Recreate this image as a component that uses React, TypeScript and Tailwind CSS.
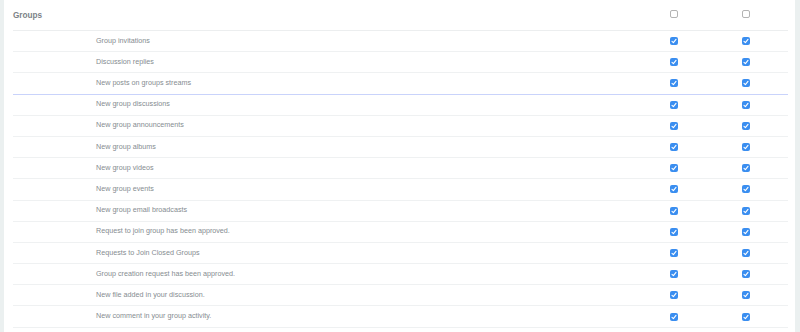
import React from "react";

const rows: { label: string; blue?: boolean }[] = [
  { label: "Group invitations" },
  { label: "Discussion replies" },
  { label: "New posts on groups streams", blue: true },
  { label: "New group discussions" },
  { label: "New group announcements" },
  { label: "New group albums" },
  { label: "New group videos" },
  { label: "New group events" },
  { label: "New group email broadcasts" },
  { label: "Request to join group has been approved." },
  { label: "Requests to Join Closed Groups" },
  { label: "Group creation request has been approved." },
  { label: "New file added in your discussion." },
  { label: "New comment in your group activity." },
];

function Box({ checked }: { checked: boolean }) {
  if (!checked) {
    return (
      <div className="w-[8px] h-[8px] rounded-[2px] border border-[#b4b4b4] bg-white" />
    );
  }
  return (
    <div className="w-[8px] h-[8px] rounded-[2px] bg-[#3a8ef0] flex items-center justify-center">
      <svg width="6" height="6" viewBox="0 0 6 6">
        <path d="M1 3.3 L2.4 4.6 L5 1.4" stroke="#fff" strokeWidth="1.1" fill="none" strokeLinecap="round" strokeLinejoin="round" />
      </svg>
    </div>
  );
}

export default function App() {
  return (
    <div
      className="w-[800px] h-[332px] flex bg-[#ebf0f0] overflow-hidden"
      style={{ fontFamily: '"Liberation Sans", Arial, sans-serif' }}
    >
      <div className="w-[4px] shrink-0" />
      <div className="w-[791px] shrink-0 bg-white pl-[9px] pr-[7px]">
        <div className="h-[31px] flex items-center border-b border-[#eceeef]">
          <div className="flex-1 text-[8.2px] font-bold text-[#7c8287] pt-[3px]">Groups</div>
          <div className="w-[72px] flex justify-center pb-[2px]">
            <Box checked={false} />
          </div>
          <div className="w-[72px] flex justify-center pb-[2px]">
            <Box checked={false} />
          </div>
          <div className="w-[6px]" />
        </div>
        {rows.map((r) => (
          <div
            key={r.label}
            className={
              "h-[21.2px] flex items-center " +
              (r.blue ? "border-b-[1.5px] border-[#c9d3fb]" : "border-b border-[#eff1f2]")
            }
          >
            <div className="flex-1 pl-[83px] text-[7.2px] text-[#868c91]">{r.label}</div>
            <div className="w-[72px] flex justify-center">
              <Box checked={true} />
            </div>
            <div className="w-[72px] flex justify-center">
              <Box checked={true} />
            </div>
            <div className="w-[6px]" />
          </div>
        ))}
      </div>
      <div className="flex-1" />
    </div>
  );
}
